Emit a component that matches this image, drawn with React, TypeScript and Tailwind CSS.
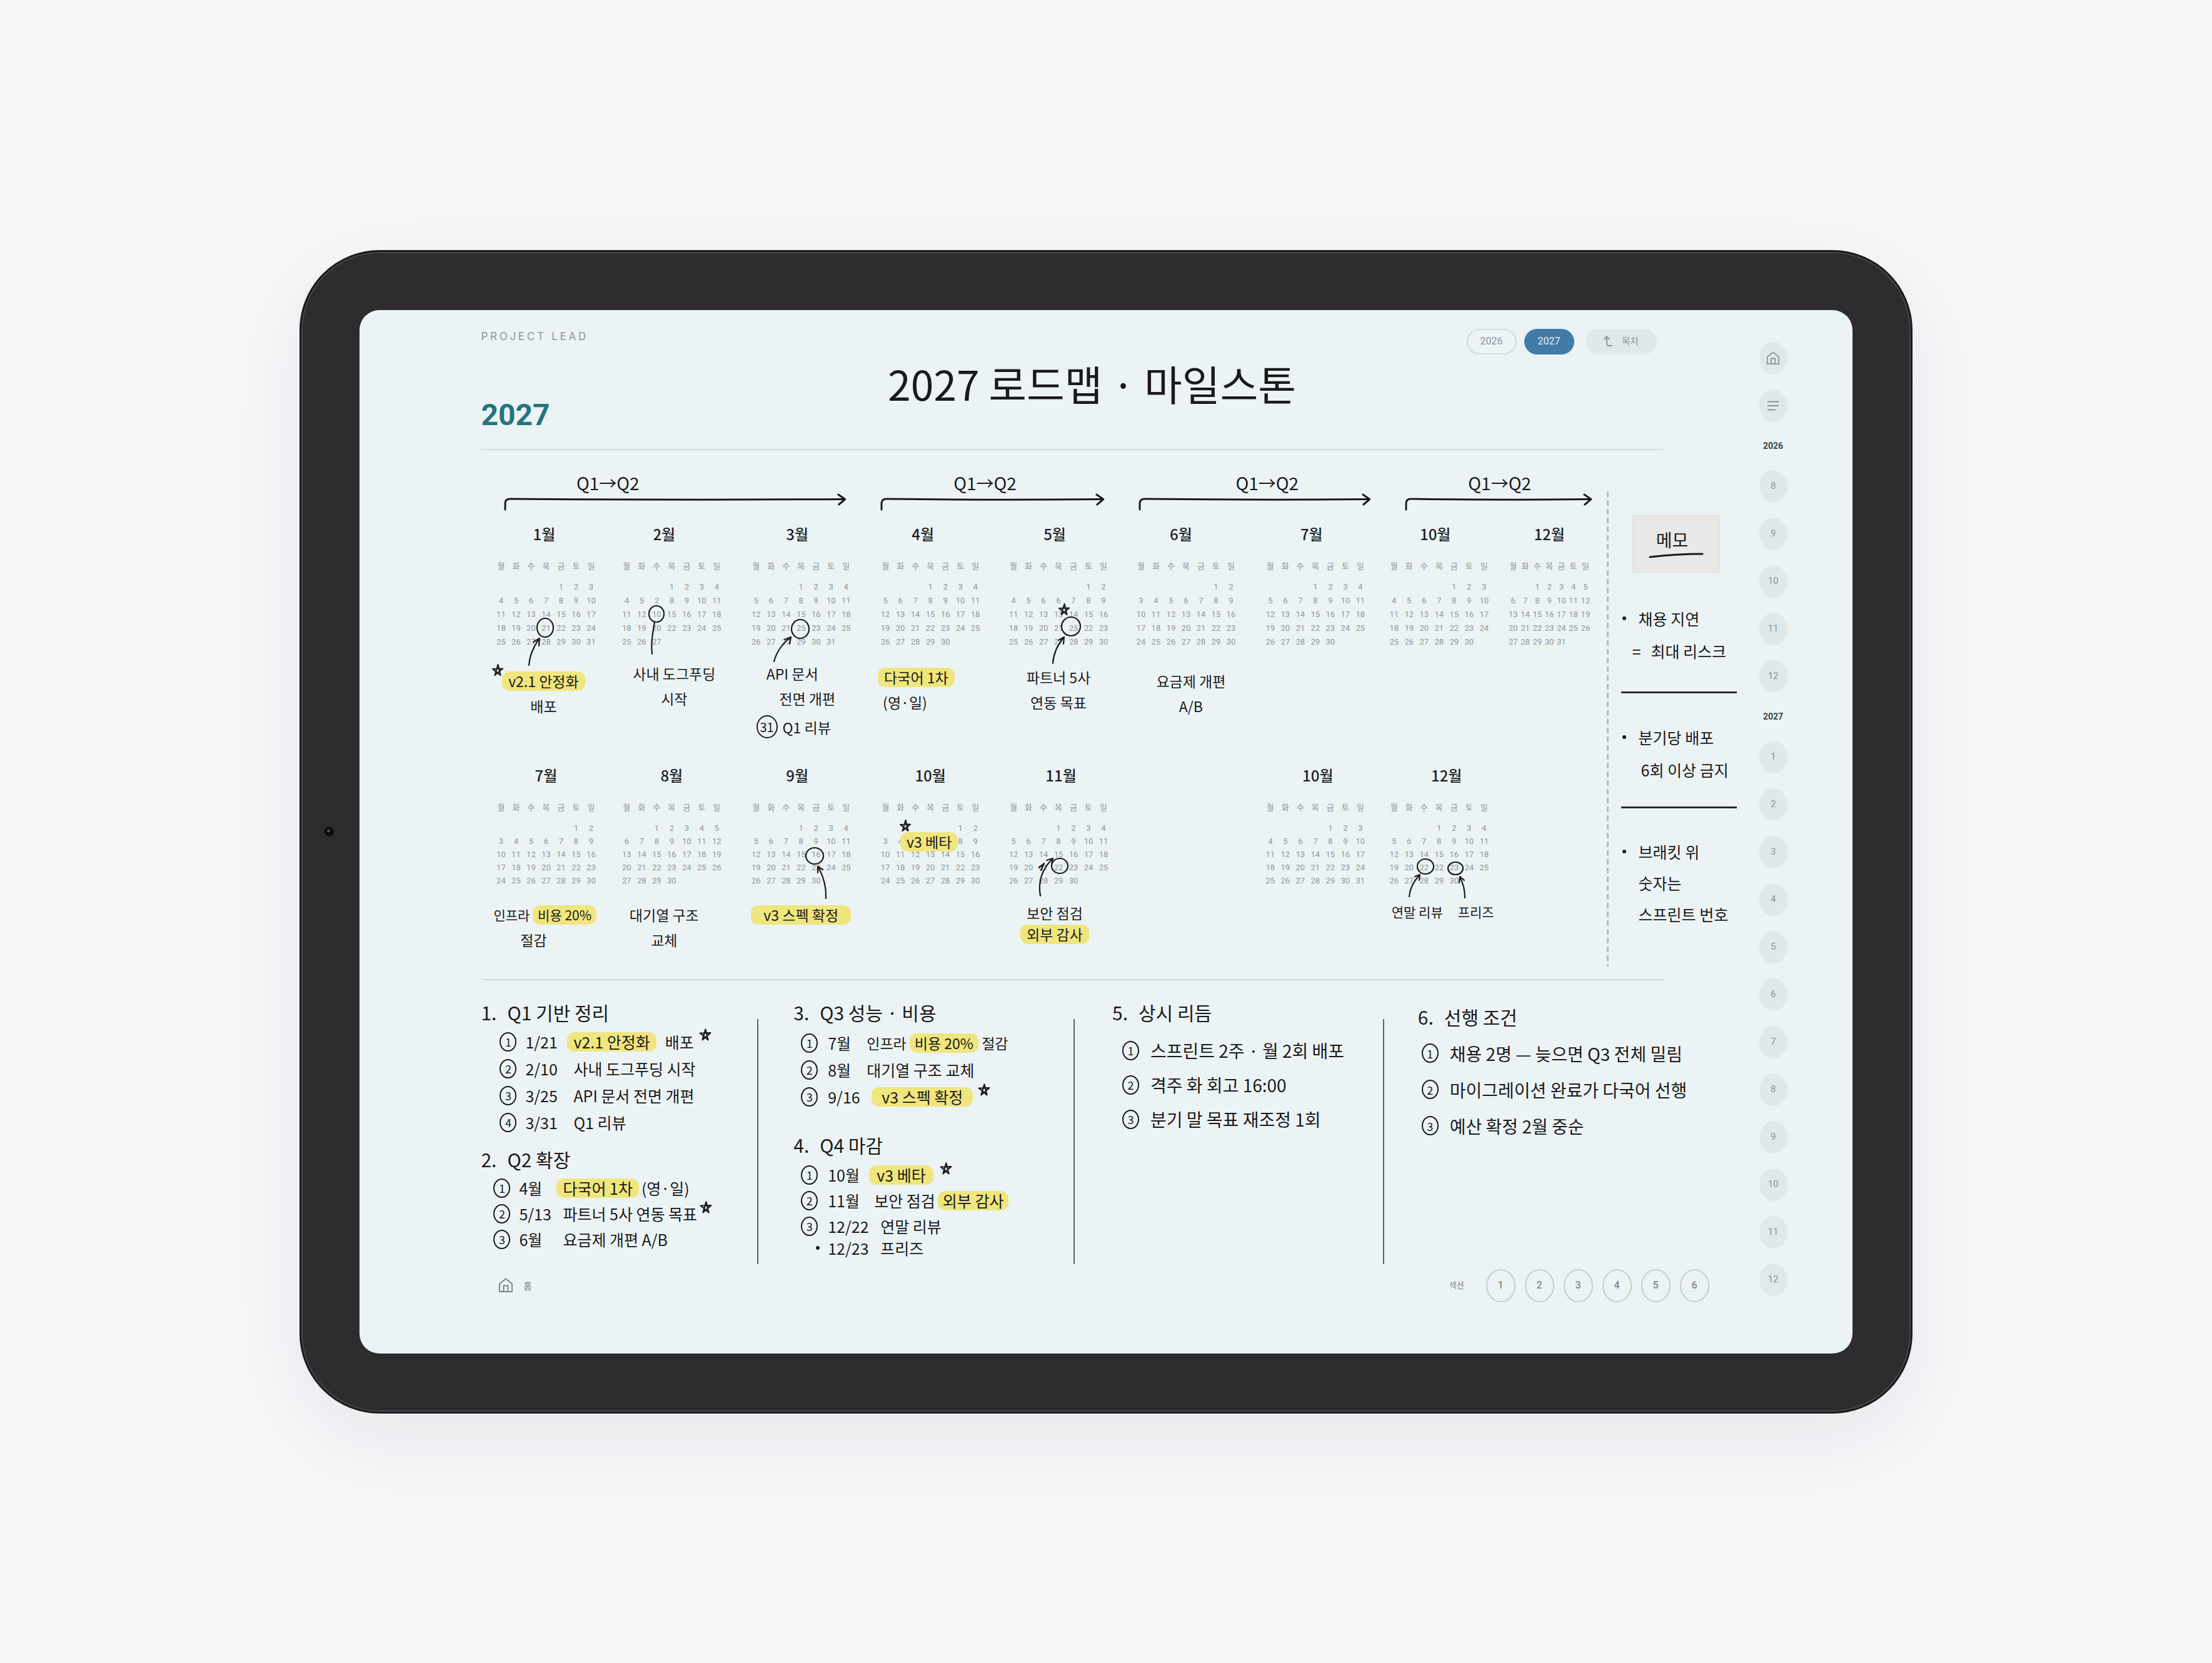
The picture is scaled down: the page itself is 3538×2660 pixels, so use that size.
import React from 'react';

type Spot = { x: number; y: number; rx: number; ry: number };

type Month = {
  name: string;
  titleClass?: string;
  rows: string[];
  spots?: Spot[];
  strokes?: string[];
  stars?: [number, number][];
  sticker?: string;
  note?: React.ReactNode;
  noteClass?: string;
};

const weekdays = ['월', '화', '수', '목', '금', '토', '일'];

const Highlight = ({ children, pad = 'px-2.5' }: { children: React.ReactNode; pad?: string }) => (
  <mark className={`inline-block rounded-xl bg-[#efe67e] leading-[31px] text-inherit ${pad}`}>{children}</mark>
);

const Star = ({ className = '' }: { className?: string }) => (
  <svg viewBox="0 0 24 24" className={`size-5 shrink-0 ${className}`} fill="none" stroke="#1a1a1a" strokeWidth="2.6" strokeLinecap="round" strokeLinejoin="round">
    <path d="M12.500 1.500 17.500 22 2 9 22 8.500 6.500 22Z" />
  </svg>
);

const HomeIcon = ({ className = '' }: { className?: string }) => (
  <svg viewBox="0 0 24 24" className={`shrink-0 ${className}`} fill="none" stroke="currentColor" strokeWidth="2" strokeLinejoin="round">
    <path d="M2 9.500 12 1.500 22 9.500V22H2Z" />
    <path d="M8.500 22V12.500H15.500V22" />
  </svg>
);

const firstHalf: Month[] = [
  {
    name: '1월',
    titleClass: 'pr-1.5',
    rows: ['. . . . 1 2 3', '4 5 6 7 8 9 10', '11 12 13 14 15 16 17', '18 19 20 21 22 23 24', '25 26 27 28 29 30 31'],
    spots: [{ x: 83, y: 166, rx: 13, ry: 15 }],
    strokes: ['M57 226C58 211 64 197 73 184M64 189 74 183 73 195'],
    stars: [[7, 234]],
    note: (
      <>
        <p><Highlight>v2.1 안정화</Highlight></p>
        <p>배포</p>
      </>
    ),
    noteClass: 'pt-3 pr-2',
  },
  {
    name: '2월',
    titleClass: 'pr-6',
    rows: ['. . . 1 2 3 4', '4 5 2 8 9 10 11', '11 12 10 15 16 17 18', '18 19 20 22 23 24 25', '25 26 27 . . . .'],
    spots: [{ x: 60, y: 144, rx: 12, ry: 13 }],
    strokes: ['M57 157C54 175 51 190 53 208'],
    note: (
      <>
        <p>사내 도그푸딩</p>
        <p>시작</p>
      </>
    ),
    noteClass: 'pl-2',
  },
  {
    name: '3월',
    rows: ['. . . 1 2 3 4', '5 6 7 8 9 10 11', '12 13 14 15 16 17 18', '19 20 21 25 23 24 25', '26 27 27 29 30 31 .'],
    spots: [{ x: 83, y: 168, rx: 14, ry: 15 }],
    strokes: ['M41 220C45 205 54 192 67 182M58 185 68 181 66 192'],
    note: (
      <>
        <p className="pr-7">API 문서</p>
        <p className="pl-5">전면 개편</p>
        <p className="mt-2 flex h-9 items-center justify-center gap-2 pr-6">
          <span className="flex h-[37px] w-[34px] items-center justify-center rounded-[50%] border-2 border-[#1a1a1a] text-xl">31</span>
          Q1 리뷰
        </p>
      </>
    ),
  },
  {
    name: '4월',
    titleClass: 'pr-6',
    rows: ['. . . 1 2 3 4', '5 6 7 8 9 10 11', '12 13 14 15 16 17 18', '19 20 21 22 23 24 25', '26 27 28 29 30 . .'],
    note: (
      <>
        <p><Highlight>다국어 1차</Highlight></p>
        <p className="px-2">(영·일)</p>
      </>
    ),
    noteClass: 'pt-1.5 text-left',
  },
  {
    name: '5월',
    rows: ['. . . . . 1 2', '4 5 6 6 7 8 9', '11 12 13 13 14 15 16', '18 19 20 21 25 22 23', '25 26 27 27 28 29 30'],
    spots: [{ x: 104, y: 164, rx: 15, ry: 15 }],
    strokes: ['M75 223C76 208 82 194 92 182M84 186 93 181 92 192'],
    stars: [[93, 137]],
    note: (
      <>
        <p>파트너 5사</p>
        <p>연동 목표</p>
      </>
    ),
    noteClass: 'pt-1.5',
  },
  {
    name: '6월',
    titleClass: 'pr-4',
    rows: ['. . . . . 1 2', '3 4 5 6 7 8 9', '10 11 12 13 14 15 16', '17 18 19 20 21 22 23', '24 25 26 27 28 29 30'],
    note: (
      <>
        <p>요금제 개편</p>
        <p>A/B</p>
      </>
    ),
    noteClass: 'pt-3 pl-4',
  },
  {
    name: '7월',
    rows: ['. . . 1 2 3 4', '5 6 7 8 9 10 11', '12 13 14 15 16 17 18', '19 20 21 22 23 24 25', '26 27 28 29 30 . .'],
  },
  {
    name: '10월',
    rows: ['. . . . 1 2 3', '4 5 6 7 8 9 10', '11 12 13 14 15 16 17', '18 19 20 21 22 23 24', '25 26 27 28 29 30 .'],
  },
  {
    name: '12월',
    titleClass: '',
    rows: ['. . 1 2 3 4 5', '6 7 8 9 10 11 12', '13 14 15 16 17 18 19', '20 21 22 23 24 25 26', '27 28 29 30 31 . .'],
  },
];

const secondHalf: (Month | null)[] = [
  {
    name: '7월',
    titleClass: '',
    rows: ['. . . . . 1 2', '3 4 5 6 7 8 9', '10 11 12 13 14 15 16', '17 18 19 20 21 22 23', '24 25 26 27 28 29 30'],
    note: (
      <>
        <p className="text-[21px] leading-10">인프라 <Highlight pad="px-2">비용 20%</Highlight></p>
        <p className="pr-8">절감</p>
      </>
    ),
    noteClass: 'pr-2',
  },
  {
    name: '8월',
    titleClass: '',
    rows: ['. . 1 2 3 4 5', '6 7 8 9 10 11 12', '13 14 15 16 17 18 19', '20 21 22 23 24 25 26', '27 28 29 30 . . .'],
    note: (
      <>
        <p>대기열 구조</p>
        <p>교체</p>
      </>
    ),
    noteClass: 'pr-6',
  },
  {
    name: '9월',
    rows: ['. . . 1 2 3 4', '5 6 7 8 9 10 11', '12 13 14 15 16 17 18', '19 20 21 22 23 24 25', '26 27 28 29 30 . .'],
    spots: [{ x: 106, y: 145, rx: 14, ry: 13 }],
    strokes: ['M124 213C125 195 120 178 112 163M111 172 111 162 119 167'],
    note: <p><Highlight pad="px-5">v3 스펙 확정</Highlight></p>,
  },
  {
    name: '10월',
    titleClass: '',
    rows: ['. . . . . 1 2', '3 4 . . . 8 9', '10 11 12 13 14 15 16', '17 18 19 20 21 22 23', '24 25 26 27 28 29 30'],
    stars: [[44, 97]],
    sticker: 'v3 베타',
  },
  {
    name: '11월',
    titleClass: 'pl-2',
    rows: ['. . . 1 2 3 4', '5 6 7 8 9 10 11', '12 13 14 15 16 17 18', '19 20 21 22 23 24 25', '26 27 28 29 30 . .'],
    spots: [{ x: 86, y: 161, rx: 13, ry: 12 }],
    strokes: ['M55 209C51 186 58 166 74 150M65 152 75 149 73 158', 'M53 164 61 157 56 168M53 163 60 160'],
    note: (
      <>
        <p>보안 점검</p>
        <p><Highlight>외부 감사</Highlight></p>
      </>
    ),
    noteClass: 'pr-3 leading-[34px]',
  },
  null,
  {
    name: '10월',
    titleClass: 'pl-2',
    rows: ['. . . . 1 2 3', '4 5 6 7 8 9 10', '11 12 13 14 15 16 17', '18 19 20 21 22 23 24', '25 26 27 28 29 30 31'],
  },
  {
    name: '12월',
    titleClass: 'pl-6',
    rows: ['. . . 1 2 3 4', '5 6 7 8 9 10 11', '12 13 14 15 16 17 18', '19 20 22 22 23 24 25', '26 27 28 29 30 . .'],
    spots: [
      { x: 62, y: 162, rx: 13, ry: 12 },
      { x: 110, y: 165, rx: 12, ry: 10 },
    ],
    strokes: ['M36 210C37 197 43 186 52 176M45 178 53 175 52 184', 'M125 212C125 200 122 188 117 179M116 188 117 178 124 184'],
    note: (
      <p className="flex gap-6 pl-2 text-[21px] leading-[30px]">
        <span>연말 리뷰</span>
        <span>프리즈</span>
      </p>
    ),
  },
];

const quarters = [
  { width: 546, label: 'pr-[216px]' },
  { width: 357, label: 'pr-6' },
  { width: 370, label: 'pl-10' },
  { width: 298, label: 'pl-1' },
];

const railMonths2026 = ['8', '9', '10', '11', '12'];
const railMonths2027 = ['1', '2', '3', '4', '5', '6', '7', '8', '9', '10', '11', '12'];

const MonthCard = ({ month, rowClass }: { month: Month; rowClass: string }) => (
  <article className="relative">
    <div className="w-full max-w-[168px]">
      <h3 className={`mb-6 text-center text-2xl leading-8 font-medium text-[#1c2326] ${month.titleClass ?? 'pr-3'}`}>{month.name}</h3>
      <table className="w-full table-fixed border-collapse text-center text-[13px] text-[#8d979a]">
        <thead>
          <tr className="h-[22px]">
            {weekdays.map((day) => (
              <th key={day} scope="col" className="p-0 leading-[22px] font-normal">
                {day}
              </th>
            ))}
          </tr>
          <tr className="h-3" />
        </thead>
        <tbody>
          {month.rows.map((row, r) => (
            <tr key={r} className={rowClass}>
              {row.split(' ').map((day, d) => (
                <td key={d} className="p-0 font-[Roboto,sans-serif]">
                  {day === '.' ? '' : day}
                </td>
              ))}
            </tr>
          ))}
        </tbody>
      </table>
    </div>
    {/* Pen marks over the dates */}
    <svg className="pointer-events-none absolute inset-0 h-full w-full overflow-visible" fill="none" stroke="#1a1a1a" strokeWidth="2.2" strokeLinecap="round" strokeLinejoin="round">
      {month.spots?.map((s, i) => <ellipse key={i} cx={s.x} cy={s.y} rx={s.rx} ry={s.ry} />)}
      {month.strokes?.map((d) => <path key={d} d={d} />)}
      {month.stars?.map(([x, y]) => (
        <path key={x} transform={`translate(${x - 10} ${y - 10})`} d="M10.500 1 14.500 18 2 8 18 7.500 5.500 18Z" />
      ))}
    </svg>
    {month.sticker && (
      <p className="absolute top-[107px] left-9 text-[23px] leading-7 whitespace-nowrap">
        <Highlight>{month.sticker}</Highlight>
      </p>
    )}
    {month.note && (
      <div className={`w-[168px] text-center text-[23px] leading-10 whitespace-nowrap ${month.noteClass ?? ''}`}>{month.note}</div>
    )}
  </article>
);

const Num = ({ n }: { n: number }) => (
  <span className="flex h-[31px] w-[27px] shrink-0 items-center justify-center rounded-[50%] border-2 border-[#1a1a1a] text-lg leading-none">
    {n}
  </span>
);

const Heading = ({ n, children }: { n: number; children: React.ReactNode }) => (
  <h2 className="flex text-[30px] leading-9">
    <span className="w-[42px]">{n}.</span>
    {children}
  </h2>
);

const RailLink = ({ label, children }: { label?: string; children: React.ReactNode }) => (
  <a
    href="#"
    aria-label={label}
    className="flex h-[52px] w-[45px] items-center justify-center rounded-[50%] bg-[#e0e9ea] text-[15px] text-[#8a9496]"
  >
    {children}
  </a>
);

const Divider = () => <div className="mt-[62px] bg-[#5c6061]" />;

const App = () => {
  return (
    <div className="flex min-h-screen items-center justify-center bg-[#f6f7f9] font-['Noto_Sans_CJK_KR',sans-serif] text-[#1a1a1a]">
      {/* Tablet frame */}
      <div className="relative w-[72.9%] rounded-[128px] border-[3px] border-[#1b1b1d] bg-[#2c2c2e] p-[93px] shadow-[inset_0_0_0_2px_#48484c,0_40px_140px_rgba(20,30,40,0.07)]">
        <div className="absolute top-1/2 left-[37px] size-[15px] -translate-y-1/2 rounded-full bg-[#0c0c0d] pt-1 pl-1">
          <div className="size-[5px] rounded-full bg-[#48484f]" />
        </div>

        <div className="flex overflow-hidden rounded-4xl bg-[#ecf3f5] pr-[104px]">
          <div className="min-w-0 flex-1 pr-9 pl-[194px]">
            {/* Header */}
            <header className="mr-[118px] border-b-2 border-[#d0dadb] pt-[30px] font-[Roboto,'Noto_Sans_CJK_KR',sans-serif]">
              <div className="flex items-start justify-between">
                <p className="font-[Inter,sans-serif] text-[17px] leading-6 tracking-[0.22em] text-[#8d979a]">PROJECT LEAD</p>
                <div className="flex items-center pr-2.5 text-base text-[#8d979a]">
                  <button type="button" className="h-[41px] w-20 rounded-full border-2 border-[#d3dbdc]">2026</button>
                  <button type="button" className="ml-3 h-[41px] w-20 rounded-full bg-[#427ba8] text-[#e6f1f8]">2027</button>
                  <button type="button" className="ml-[18px] flex h-[41px] w-[114px] items-center justify-center gap-3.5 rounded-full bg-[#e0e9ea] text-[15px]">
                    <svg viewBox="0 0 16 18" className="h-[18px] w-4" fill="none" stroke="currentColor" strokeWidth="2">
                      <path d="M1.500 6 6 1.500 10.500 6M6 2V12Q6 16 10 16H15" />
                    </svg>
                    목차
                  </button>
                </div>
              </div>
              <div className="grid h-[151px] grid-cols-[1fr_auto_1fr]">
                <p className="mb-[30px] self-end text-5xl leading-[48px] font-bold text-[#23757c]">2027</p>
                <h1 className="pl-16 font-['Noto_Sans_CJK_KR',sans-serif] text-[66px] leading-[90px]">2027 로드맵 · 마일스톤</h1>
              </div>
            </header>

            {/* Year plan */}
            <section className="flex">
              <div className="min-w-0 flex-1 pt-9 pr-6 pl-5">
                <div className="grid grid-cols-[546fr_357fr_370fr_298fr] gap-14 pl-[18px]">
                  {quarters.map((q) => (
                    <div key={q.width}>
                      <p className={`mb-1 text-center text-[28px] leading-8 ${q.label}`}>Q1→Q2</p>
                      <svg viewBox={`0 0 ${q.width} 24`} preserveAspectRatio="none" className="h-6 w-full overflow-visible" fill="none" stroke="#1a1a1a" strokeWidth="3" strokeLinecap="round" strokeLinejoin="round">
                        <path d={`M1 23V13Q1 6 9 6Q${q.width / 2} 8 ${q.width - 2} 6.500`} />
                        <path d={`M${q.width - 12} -1 ${q.width - 1} 6.500 ${q.width - 11} 15`} />
                      </svg>
                    </div>
                  ))}
                </div>

                <div className="mt-[22px] mb-[43px] grid grid-cols-[201fr_207fr_207fr_205fr_204fr_207fr_198fr_193fr_135fr]">
                  {firstHalf.map((month, i) => (
                    <div key={i} className="[&_table]:mb-[19px]">
                      <MonthCard month={month} rowClass="h-[22px] leading-[22px]" />
                    </div>
                  ))}
                </div>

                <div className="mb-[43px] grid grid-cols-[201fr_207fr_207fr_205fr_204fr_207fr_198fr_193fr_135fr]">
                  {secondHalf.map((month, i) => (
                    <div key={i} className="[&_table]:mb-6">
                      {month && <MonthCard month={month} rowClass="h-[21px] leading-[21px]" />}
                    </div>
                  ))}
                </div>
              </div>

              {/* Memo column */}
              <div className="mt-[66px] mb-5 w-[3px] bg-[repeating-linear-gradient(to_bottom,#b4bcbe_0,#b4bcbe_9px,transparent_9px,transparent_14px)]" />
              <aside className="w-[205px] pt-[104px] pl-5 text-[25px]">
                <div className="ml-[18px] flex h-[92px] w-[140px] flex-col items-center border border-[#dcdcda] bg-[#eae8e6] pt-[18px]">
                  <h2 className="pr-3 text-[28px] leading-10">메모</h2>
                  <svg viewBox="0 0 88 10" className="h-2.5 w-[88px]" fill="none" stroke="#1a1a1a" strokeWidth="3" strokeLinecap="round">
                    <path d="M2 8Q44 3 86 3" />
                  </svg>
                </div>
                <ul className="whitespace-nowrap">
                  <li className="mt-[47px] leading-[52px]">
                    <p className="flex items-center gap-5"><span className="ml-0.5 size-1.5 rounded-full bg-[#1a1a1a]" />채용 지연</p>
                    <p className="flex gap-4 pl-[18px]"><span>=</span>최대 리스크</p>
                  </li>
                  <li className="mt-[39px] border-t-[3px] border-[#2a2b2c] pt-11 leading-[52px]">
                    <p className="flex items-center gap-5"><span className="ml-0.5 size-1.5 rounded-full bg-[#1a1a1a]" />분기당 배포</p>
                    <p className="pl-8">6회 이상 금지</p>
                  </li>
                  <li className="mt-[33px] border-t-[3px] border-[#2a2b2c] pt-11 leading-[50px]">
                    <p className="flex items-center gap-5"><span className="ml-0.5 size-1.5 rounded-full bg-[#1a1a1a]" />브래킷 위</p>
                    <p className="pl-7">숫자는</p>
                    <p className="pl-7">스프린트 번호</p>
                  </li>
                </ul>
              </aside>
            </section>

            <hr className="mr-[116px] ml-1 border-t-2 border-[#cdd8d9]" />

            {/* Section lists */}
            <section className="grid grid-cols-[442fr_2px_504fr_2px_493fr_2px_564fr] text-[25px] whitespace-nowrap">
              <div className="pt-[33px] pb-[19px]">
                <Heading n={1}>Q1 기반 정리</Heading>
                <ol className="mt-2 pl-[30px] leading-[43px]">
                  <li className="flex items-center">
                    <Num n={1} /><span className="ml-3.5 w-[77px]">1/21</span>
                    <span className="-ml-2.5"><Highlight>v2.1 안정화</Highlight></span>
                    <span className="ml-3.5">배포</span><Star className="ml-2 self-start" />
                  </li>
                  <li className="flex items-center">
                    <Num n={2} /><span className="ml-3.5 w-[77px]">2/10</span>사내 도그푸딩 시작
                  </li>
                  <li className="flex items-center">
                    <Num n={3} /><span className="ml-3.5 w-[77px]">3/25</span>API 문서 전면 개편
                  </li>
                  <li className="flex items-center">
                    <Num n={4} /><span className="ml-3.5 w-[77px]">3/31</span>Q1 리뷰
                  </li>
                </ol>
                <div className="mt-[19px]">
                  <Heading n={2}>Q2 확장</Heading>
                </div>
                <ol className="mt-2 pl-5 leading-[41px]">
                  <li className="flex items-center">
                    <Num n={1} /><span className="ml-3.5 w-[70px]">4월</span>
                    <span className="-ml-2.5"><Highlight>다국어 1차</Highlight></span>
                    <span className="ml-1">(영·일)</span>
                  </li>
                  <li className="flex items-center">
                    <Num n={2} /><span className="ml-3.5 w-[70px]">5/13</span>파트너 5사 연동 목표
                    <Star className="ml-1 self-start" />
                  </li>
                  <li className="flex items-center">
                    <Num n={3} /><span className="ml-3.5 w-[70px]">6월</span>요금제 개편 A/B
                  </li>
                </ol>
              </div>
              <Divider />
              <div className="pt-[33px] pl-14">
                <Heading n={3}>Q3 성능 · 비용</Heading>
                <ol className="mt-2.5 pl-3 leading-[43px]">
                  <li className="flex items-center">
                    <Num n={1} /><span className="ml-4 w-[62px]">7월</span>
                    <span className="text-[23px]">인프라 <Highlight pad="px-2">비용 20%</Highlight> 절감</span>
                  </li>
                  <li className="flex items-center">
                    <Num n={2} /><span className="ml-4 w-[62px]">8월</span>대기열 구조 교체
                  </li>
                  <li className="flex items-center">
                    <Num n={3} /><span className="ml-4 w-[70px]">9/16</span>
                    <Highlight pad="px-4">v3 스펙 확정</Highlight>
                    <Star className="ml-2 self-start" />
                  </li>
                </ol>
                <div className="mt-[37px]">
                  <Heading n={4}>Q4 마감</Heading>
                </div>
                <ol className="mt-2.5 pl-3 leading-[41px]">
                  <li className="flex items-center">
                    <Num n={1} /><span className="ml-4 w-[76px]">10월</span>
                    <span className="-ml-2.5"><Highlight pad="px-3">v3 베타</Highlight></span>
                    <Star className="ml-2.5 self-start" />
                  </li>
                  <li className="flex items-center">
                    <Num n={2} /><span className="ml-4 w-[74px]">11월</span>보안 점검
                    <span className="ml-1"><Highlight pad="px-2">외부 감사</Highlight></span>
                  </li>
                  <li className="flex items-center">
                    <Num n={3} /><span className="ml-4 w-[84px]">12/22</span>연말 리뷰
                  </li>
                  <li className="flex items-center leading-7">
                    <span className="ml-6 size-1.5 rounded-full bg-[#1a1a1a]" />
                    <span className="ml-[13px] w-[84px]">12/23</span>프리즈
                  </li>
                </ol>
              </div>
              <Divider />
              <div className="pt-[33px] pl-[60px] text-[28px]">
                <Heading n={5}>상시 리듬</Heading>
                <ol className="mt-4 pl-4 leading-[55px]">
                  <li className="flex items-center gap-[18px]"><Num n={1} />스프린트 2주 · 월 2회 배포</li>
                  <li className="flex items-center gap-[18px]"><Num n={2} />격주 화 회고 16:00</li>
                  <li className="flex items-center gap-[18px]"><Num n={3} />분기 말 목표 재조정 1회</li>
                </ol>
              </div>
              <Divider />
              <div className="pt-10 pl-[54px] text-[28px]">
                <Heading n={6}>선행 조건</Heading>
                <ol className="mt-3 pl-1.5 leading-[58px]">
                  <li className="flex items-center gap-[18px]"><Num n={1} />채용 2명 — 늦으면 Q3 전체 밀림</li>
                  <li className="flex items-center gap-[18px]"><Num n={2} />마이그레이션 완료가 다국어 선행</li>
                  <li className="flex items-center gap-[18px]"><Num n={3} />예산 확정 2월 중순</li>
                </ol>
              </div>
            </section>

            {/* Footer */}
            <footer className="mt-2 flex items-center justify-between pr-11 pb-[82px] pl-7 text-[#7d8789]">
              <a href="#" className="flex items-center gap-4 text-sm font-medium">
                <HomeIcon className="size-6" />홈
              </a>
              <nav className="flex items-center gap-[15px] font-[Roboto,'Noto_Sans_CJK_KR',sans-serif]">
                <span className="mr-5 text-[13px]">섹션</span>
                {[1, 2, 3, 4, 5, 6].map((n) => (
                  <a key={n} href="#" className="flex h-[53px] w-[47px] items-center justify-center rounded-[50%] border-2 border-[#c5cecf] text-base font-medium">
                    {n}
                  </a>
                ))}
              </nav>
            </footer>
          </div>

          {/* Month rail */}
          <nav className="flex shrink-0 flex-col items-center gap-6 pt-[51px] font-[Roboto,sans-serif]">
            <RailLink label="홈"><HomeIcon className="size-[22px]" /></RailLink>
            <RailLink label="목차">
              <svg viewBox="0 0 18 16" className="h-4 w-[18px]" fill="none" stroke="currentColor" strokeWidth="2">
                <path d="M0 1.500H18M0 8H18M0 14.500H13" />
              </svg>
            </RailLink>
            <p className="text-sm leading-[29px] font-bold text-[#3c4547]">2026</p>
            {railMonths2026.map((m) => <RailLink key={m}>{m}</RailLink>)}
            <p className="text-sm leading-[29px] font-bold text-[#3c4547]">2027</p>
            {railMonths2027.map((m) => <RailLink key={m}>{m}</RailLink>)}
          </nav>
        </div>
      </div>
    </div>
  );
};

export default App;
